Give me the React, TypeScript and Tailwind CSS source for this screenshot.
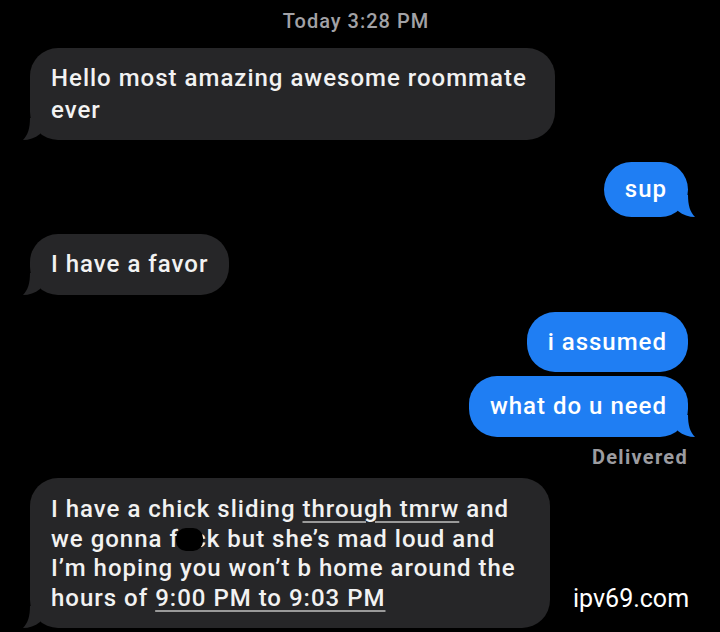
import type { ReactNode } from "react";

const GRAY = "#262628";
const BLUE = "#1f7ef3";

function Tail({ side, color }: { side: "left" | "right"; color: string }) {
  return (
    <svg
      width="20"
      height="22"
      viewBox="0 0 20 22"
      className={
        side === "left"
          ? "absolute -left-[7px] bottom-0"
          : "absolute -right-[7px] bottom-0 -scale-x-100"
      }
    >
      <path d="M7 0 C7 10 5 17 0 22 C6 22 12 20 17 16 L17 0 Z" fill={color} />
    </svg>
  );
}

function Bubble({
  side,
  tail,
  className,
  children,
}: {
  side: "left" | "right";
  tail?: boolean;
  className?: string;
  children: ReactNode;
}) {
  const color = side === "left" ? GRAY : BLUE;
  return (
    <div
      className={`relative rounded-[28px] px-[21px] text-[24px] font-medium tracking-[1px] ${
        side === "left"
          ? "self-start bg-[#262628] text-[#f2f2f2]"
          : "self-end bg-[#1f7ef3] text-white"
      } ${className ?? ""}`}
    >
      {children}
      {tail && <Tail side={side} color={color} />}
    </div>
  );
}

export default function App() {
  return (
    <div
      className="relative w-[720px] h-[632px] overflow-hidden bg-black flex flex-col pl-[30px] pr-[32px] pt-[10px]"
      style={{ fontFamily: "Roboto, 'Liberation Sans', sans-serif" }}
    >
      {/* Timestamp */}
      <div className="h-[22px] leading-[22px] text-center text-[20px] font-medium tracking-[1px] text-[#a2a2a6] pr-[6px]">
        Today 3:28 PM
      </div>

      <Bubble side="left" tail className="mt-[16px] h-[92px] py-[14px] leading-[32px] rounded-[26px] w-[525px]">
        Hello most amazing awesome roommate
        <br />
        ever
      </Bubble>

      <Bubble side="right" tail className="mt-[22px] h-[55px] leading-[55px]">
        sup
      </Bubble>

      <Bubble side="left" tail className="mt-[17px] h-[61px] leading-[61px]">
        I have a favor
      </Bubble>

      <Bubble side="right" className="mt-[17px] h-[60px] leading-[60px]">
        i assumed
      </Bubble>

      <Bubble side="right" tail className="mt-[4px] h-[61px] leading-[61px]">
        what do u need
      </Bubble>

      <div className="mt-[10px] self-end h-[20px] leading-[20px] text-[20px] font-bold text-[#9c9ca0] tracking-[1.3px]">
        Delivered
      </div>

      <Bubble side="left" tail className="mt-[11px] h-[150px] pt-[17px] leading-[29.5px] w-[520px] whitespace-nowrap">
        I have a chick sliding{" "}
        <span className="underline decoration-[#9a9a9a] decoration-2 underline-offset-[4px]">
          through tmrw
        </span>{" "}
        and
        <br />
        we gonna f
        <span className="relative">
          uc
          <span className="absolute left-[-3px] top-[3px] w-[27px] h-[23px] rounded-[10px] bg-black" />
        </span>
        k but she’s mad loud and
        <br />
        I’m hoping you won’t b home around the
        <br />
        hours of{" "}
        <span className="underline decoration-[#9a9a9a] decoration-2 underline-offset-[4px]">
          9:00 PM to 9:03 PM
        </span>
      </Bubble>

      {/* Watermark */}
      <div className="absolute left-[573px] top-[580px] text-[25px] text-white">
        ipv69.com
      </div>
    </div>
  );
}
